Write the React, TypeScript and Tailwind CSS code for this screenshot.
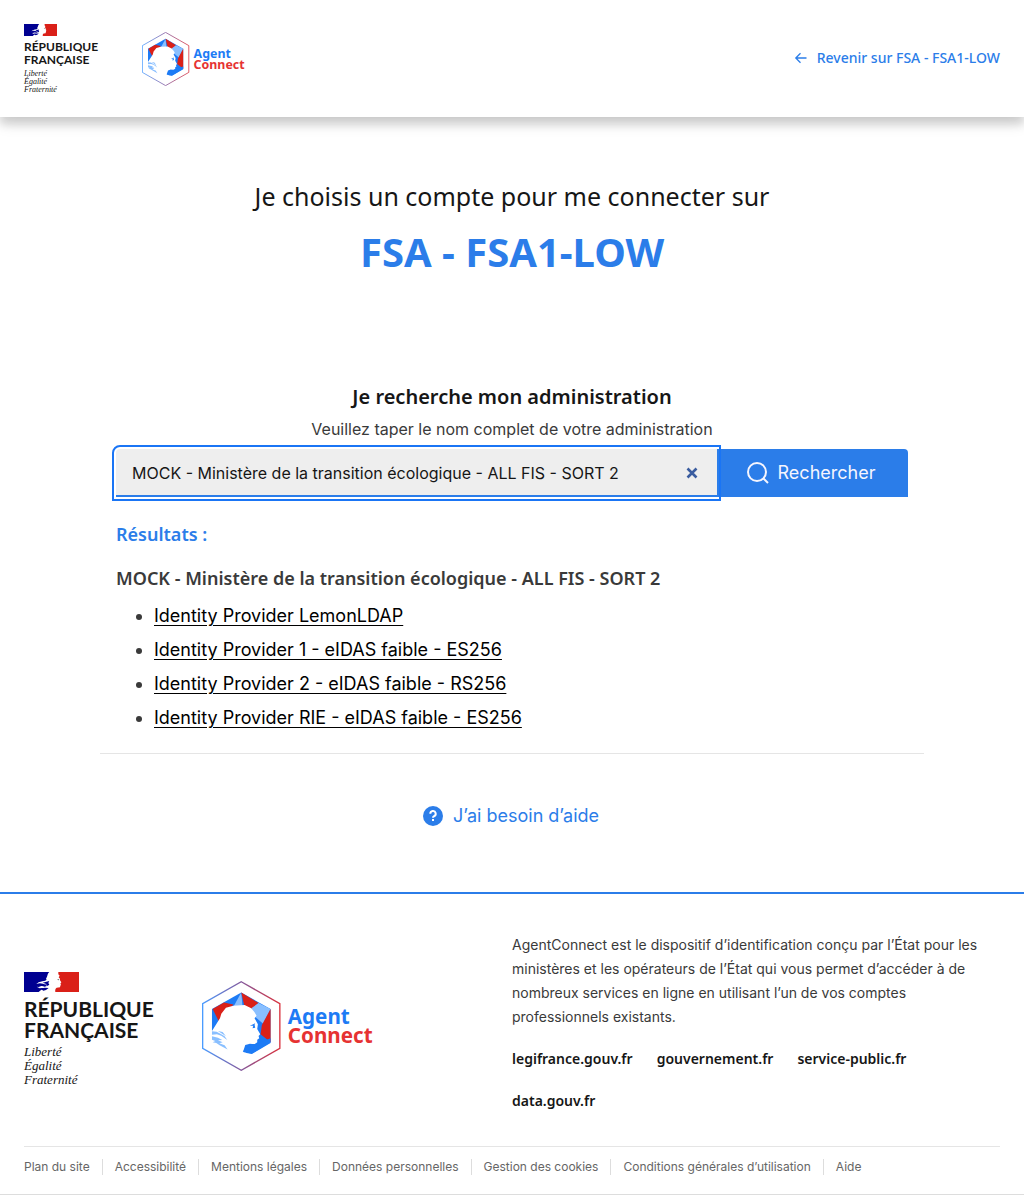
import { useState } from 'react';

function Flag({ className }: { className: string }) {
  return (
    <svg viewBox="0 0 165 60" className={className} preserveAspectRatio="none" aria-hidden="true">
      <rect width="165" height="60" fill="#fff" />
      <path d="M0 0H76C71 4 71 9 69 14L66 20L68 22L64 26L55 28L44 31L37 36L47 34L57 35L66 39L60 43L52 42L44 45L38 44L47 49L55 48L64 51L52 53L44 60H0Z" fill="#000091" />
      <path d="M64 30L76 27L73 33L76 38L70 42L67 36L56 32ZM56 39L69 37L67 43L60 44ZM50 50L62 47L74 48L66 54L58 56Z" fill="#000091" />
      <path d="M103 0H165V60H94C93 54 94 50 98 47L108 46L109 41L111 38L109 35L112 31L108 25L108 20L104 16L107 11L103 7Z" fill="#da2018" />
      <path d="M99 23l7-2-2 4z" fill="#555" />
    </svg>
  );
}

function Republique({ large = false }: { large?: boolean }) {
  return (
    <div className={large ? 'w-[130px] text-[#161616]' : 'w-[78px] text-[#161616]'}>
      <Flag className={large ? 'block h-5 w-[55px]' : 'block h-3 w-[33px]'} />
      <p className={large ? "mt-1.5 font-['Lato'] text-[21px] leading-[21px] font-bold" : "mt-1 font-['Lato'] text-[12px] leading-[13px] font-bold"}>
        RÉPUBLIQUE<br />FRANÇAISE
      </p>
      <p className={large ? "mt-[5px] font-['Liberation_Serif'] text-[13px] leading-[14px] italic" : "mt-1 font-['Liberation_Serif'] text-[8px] leading-[8px] italic"}>
        Liberté<br />Égalité<br />Fraternité
      </p>
    </div>
  );
}

function AgentConnect({ className, id }: { className: string; id: string }) {
  return (
    <svg viewBox="0 0 520 270" className={className} role="img" aria-label="Agent Connect">
      <defs>
        <linearGradient id={id} x1="0" x2="1">
          <stop offset="0" stopColor="#4a9cff" />
          <stop offset="0.5" stopColor="#83589c" />
          <stop offset="1" stopColor="#d9303c" />
        </linearGradient>
      </defs>
      <path d="M118 2L234 68V202L118 268L2 202V68Z" fill="none" stroke={`url(#${id})`} strokeWidth="4" />
      <path d="M118 34L206 84V184L150 218L126 214L30 150V84Z" fill="#1d7bf5" />
      <path d="M118 34L94 78H122Z" fill="#89bfff" />
      <path d="M118 34L170 66L150 86L128 78Z" fill="#da2018" />
      <path d="M170 66L206 84L184 128L160 108L148 82Z" fill="#89bfff" />
      <path d="M206 84V184L176 160L180 132Z" fill="#da2018" />
      <path d="M32 84L66 64L94 70L54 128Z" fill="#da2018" />
      <path d="M54 122L66 152L30 152Z" fill="#89bfff" />
      <path d="M30 150L54 112L58 98L72 80L94 74L128 72L148 82L158 94L164 104L158 112L168 130L166 144L175 160L170 165L172 172L166 176L166 184L158 190L144 188L130 192L126 205L118 222L78 202L30 174Z" fill="#fff" />
      <path d="M30 151L44 152L58 160L68 166L76 177L58 164L45 160L30 161ZM30 166L48 170L61 177L48 178L62 184L52 187L68 193L77 206L53 193L43 186L32 184L40 180L30 176ZM48 150L62 153L72 166Z" fill="#89bfff" />
      <path d="M144 134L160 127L158 131L160 140L152 142L154 134Z" fill="#1d7bf5" />
      <path d="M129 203L148 190L166 188L178 182L206 172V186L150 219L134 216L126 210Z" fill="#1d7bf5" />
      <g fontFamily="Noto Sans" fontWeight="700" fontSize="62">
        <text x="258" y="128" fill="#1d7bf5">Agent</text>
        <text x="258" y="187" fill="#e63232">Connect</text>
      </g>
    </svg>
  );
}

const providers = [
  'Identity Provider LemonLDAP',
  'Identity Provider 1 - eIDAS faible - ES256',
  'Identity Provider 2 - eIDAS faible - RS256',
  'Identity Provider RIE - eIDAS faible - ES256',
];
const sites = ['legifrance.gouv.fr', 'gouvernement.fr', 'service-public.fr', 'data.gouv.fr'];
const legal = ['Plan du site', 'Accessibilité', 'Mentions légales', 'Données personnelles', 'Gestion des cookies', 'Conditions générales d’utilisation', 'Aide'];

export default function App() {
  const [query, setQuery] = useState('MOCK - Ministère de la transition écologique - ALL FIS - SORT 2');
  return (
    <div className="bg-white font-['Inter','Noto_Sans',sans-serif] text-[#3a3a3a]">
      <header className="flex items-center justify-between px-6 pt-6 pb-[23px] shadow-[0_8px_8px_0_rgba(0,0,0,0.1),0_4px_16px_0_rgba(0,0,0,0.16)]">
        <div className="flex items-center gap-10">
          <Republique />
          <AgentConnect className="h-[54px] w-[104px]" id="header-hexagon" />
        </div>
        <a href="#retour" className="flex items-center gap-2 pb-0.5 font-['Noto_Sans'] text-sm font-medium text-[#2b7de9]">
          <svg viewBox="0 0 16 16" className="size-4" fill="none" stroke="currentColor" strokeWidth="1.3" aria-hidden="true">
            <path d="M13.500 8H3M7.500 3.200L2.800 8l4.700 4.800" />
          </svg>
          Revenir sur FSA - FSA1-LOW
        </a>
      </header>

      <main className="mx-auto max-w-[824px] text-center">
        <h1 className="pt-[59px] font-['Noto_Sans'] text-[#161616]">
          <span className="block text-[25px] leading-10">Je choisis un compte pour me connecter sur</span>
          <span className="mt-3 block text-[40px] leading-12 font-bold text-[#2b7de9]">FSA - FSA1-LOW</span>
        </h1>
        <section className="border-b border-[#e5e5e5] px-4 pt-[105px] pb-[18px]">
          <label htmlFor="search" className="block">
            <span className="block font-['Noto_Sans'] text-xl leading-8 font-semibold text-[#161616]">Je recherche mon administration</span>
            <span className="block text-base leading-8">Veuillez taper le nom complet de votre administration</span>
          </label>
          <form className="mt-1 flex h-12" onSubmit={(e) => e.preventDefault()}>
            <div className="relative z-10 flex min-w-0 flex-1 rounded-tl bg-[#eee] shadow-[inset_0_-2px_0_#2b7de9] outline-2 outline-offset-2 outline-[#1a75f5]">
              <input id="search" value={query} onChange={(e) => setQuery(e.target.value)} className="min-w-0 flex-1 bg-transparent pl-4 text-base text-[#161616] outline-none" />
              <button type="button" aria-label="Effacer" onClick={() => setQuery('')} className="mr-[15px] flex w-5 items-center justify-center text-[#3a5c9f]">
                <svg viewBox="0 0 12 12" className="size-3" stroke="currentColor" strokeWidth="2.600" aria-hidden="true"><path d="M1.500 1.500l9 9M10.500 1.500l-9 9" /></svg>
              </button>
            </div>
            <button type="submit" className="flex w-[191px] items-center justify-center gap-2 rounded-tr bg-[#2b7de9] pr-1 text-lg text-[#f5f5fe]">
              <svg viewBox="0 0 24 24" className="size-6" fill="none" stroke="currentColor" strokeWidth="2" aria-hidden="true"><circle cx="11" cy="11" r="9" /><path d="M17.500 17.500l4.500 4.500" /></svg>
              Rechercher
            </button>
          </form>
          <div className="text-left text-lg">
            <h2 className="mt-[23px] font-['Noto_Sans'] leading-7 font-semibold text-[#2b7de9]">Résultats :</h2>
            <h3 className="mt-4 font-['Noto_Sans'] leading-7 font-semibold">MOCK - Ministère de la transition écologique - ALL FIS - SORT 2</h3>
            <ul className="mt-[7px] list-disc pl-[38px]">
              {providers.map((name) => (
                <li key={name} className="h-[34px] leading-[34px]"><a href="#fi" className="text-black underline underline-offset-3">{name}</a></li>
              ))}
            </ul>
          </div>
        </section>
        <a href="#aide" className="mx-auto mt-12 mb-[62px] flex w-fit items-center gap-2 pr-1 text-lg text-[#2b7de9]">
          <svg viewBox="0 0 24 24" className="size-6" aria-hidden="true">
            <circle cx="12" cy="12" r="10" fill="currentColor" />
            <path d="M9.300 9.800a2.700 2.700 0 1 1 3.700 2.500q-1 .4-1 1.500" fill="none" stroke="#fff" strokeWidth="2" />
            <path d="M11 15h2v2h-2z" fill="#fff" />
          </svg>
          J’ai besoin d’aide
        </a>
      </main>

      <footer className="border-t-2 border-[#2b7de9] pt-[39px]">
        <div className="grid grid-cols-2 items-center px-6">
          <div className="flex items-start gap-12 pt-3">
            <Republique large />
            <AgentConnect className="mt-[9px] h-[90px] w-[173px]" id="footer-hexagon" />
          </div>
          <div className="text-sm leading-6">
            <p>AgentConnect est le dispositif d’identification conçu par l’État pour les ministères et les opérateurs de l’État qui vous permet d’accéder à de nombreux services en ligne en utilisant l’un de vos comptes professionnels existants.</p>
            <ul className="mt-[18px] flex flex-wrap gap-x-6 gap-y-[18px] font-['Noto_Sans'] font-semibold text-[#161616]">
              {sites.map((s) => <li key={s}><a href={`https://${s}`}>{s}</a></li>)}
            </ul>
          </div>
        </div>
        <ul className="mx-6 mt-[33px] flex flex-wrap border-t border-[#e5e5e5] pt-3 pb-[19px] text-xs leading-4 text-[#666]">
          {legal.map((s) => <li key={s} className="mr-3 border-r border-[#ddd] pr-3 last:border-0"><a href="#legal">{s}</a></li>)}
        </ul>
        <hr className="border-[#ddd]" />
      </footer>
    </div>
  );
}
